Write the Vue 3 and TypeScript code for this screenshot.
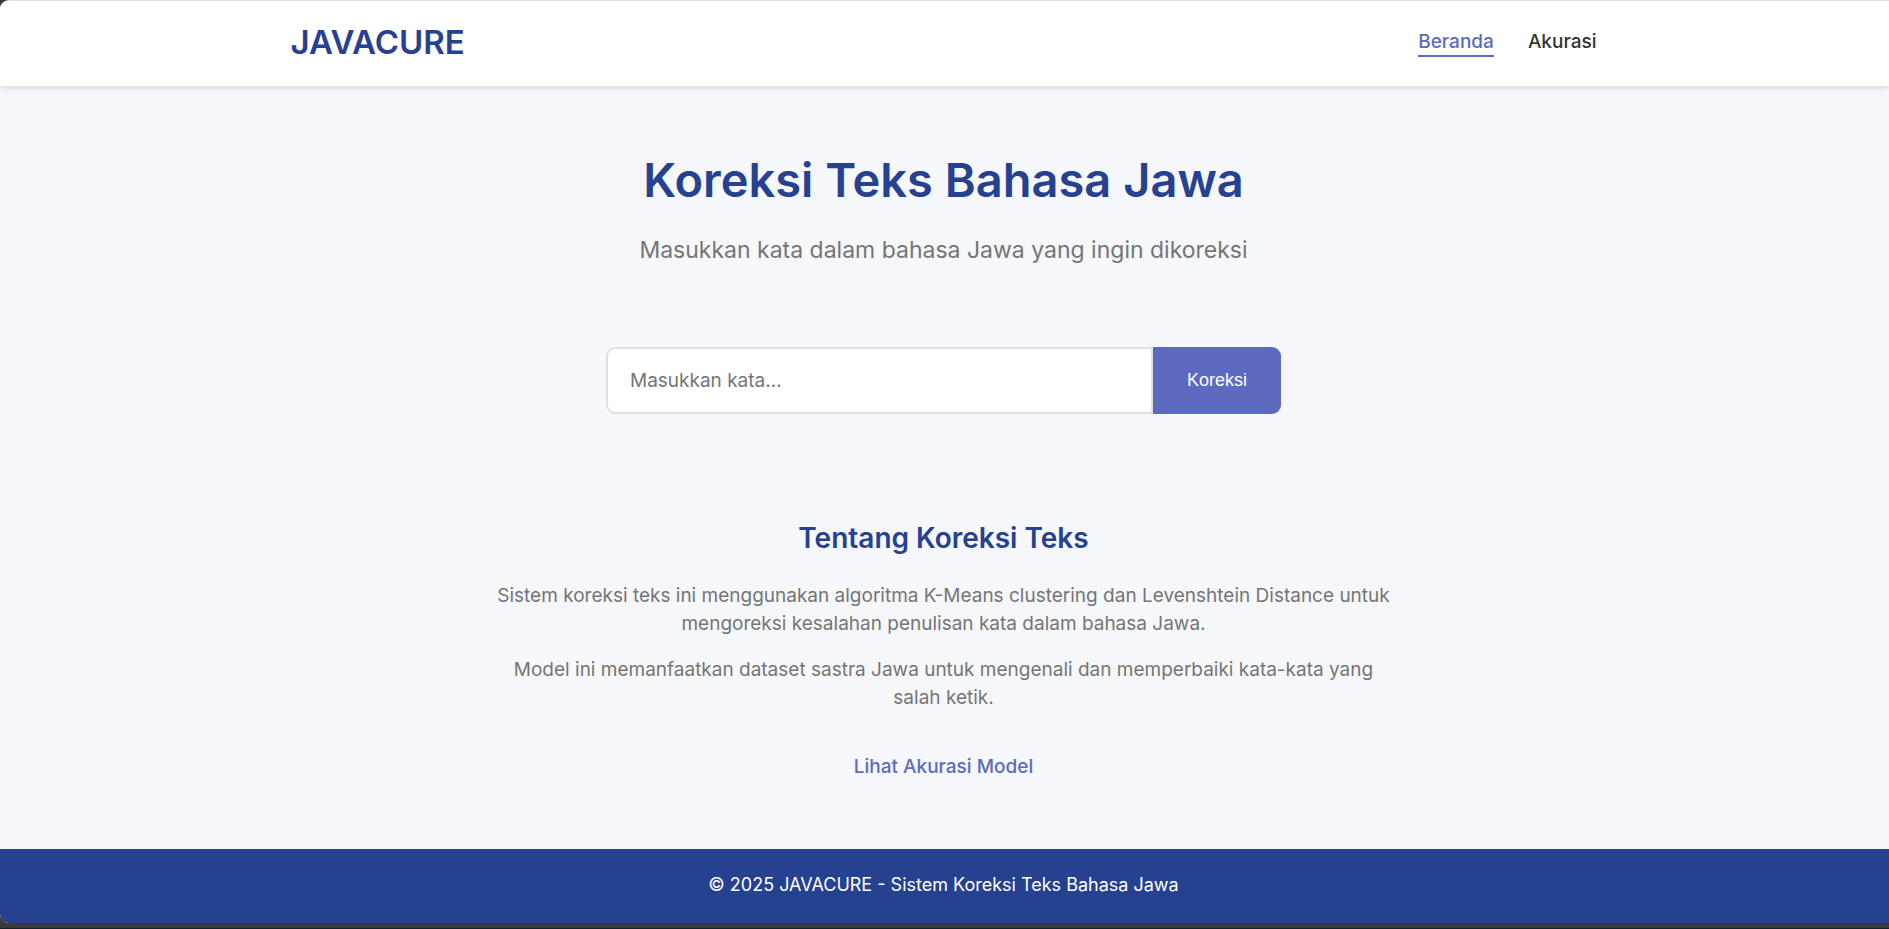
<script setup lang="ts">
import { ref } from 'vue'

interface NavItem {
  label: string
  href: string
  active: boolean
}

const navItems: NavItem[] = [
  { label: 'Beranda', href: '#beranda', active: true },
  { label: 'Akurasi', href: '#akurasi', active: false },
]

const paragraphs: string[] = [
  'Sistem koreksi teks ini menggunakan algoritma K-Means clustering dan Levenshtein Distance untuk mengoreksi kesalahan penulisan kata dalam bahasa Jawa.',
  'Model ini memanfaatkan dataset sastra Jawa untuk mengenali dan memperbaiki kata-kata yang salah ketik.',
]

const word = ref('')
</script>

<template>
  <div class="page">
    <header class="header">
      <div class="container">
        <div class="logo">JAVACURE</div>
        <nav class="nav">
          <a
            v-for="item in navItems"
            :key="item.href"
            :href="item.href"
            class="nav-link"
            :class="{ active: item.active }"
          >{{ item.label }}</a>
        </nav>
      </div>
    </header>

    <main class="main">
      <section class="hero">
        <h1>Koreksi Teks Bahasa Jawa</h1>
        <p>Masukkan kata dalam bahasa Jawa yang ingin dikoreksi</p>
      </section>

      <form class="search" @submit.prevent>
        <input v-model="word" type="text" placeholder="Masukkan kata..." aria-label="Masukkan kata" />
        <button type="submit">Koreksi</button>
      </form>

      <section class="about">
        <h2>Tentang Koreksi Teks</h2>
        <p v-for="text in paragraphs" :key="text">{{ text }}</p>
        <a href="#akurasi" class="more">Lihat Akurasi Model</a>
      </section>
    </main>

    <footer class="footer">
      <p>© 2025 JAVACURE - Sistem Koreksi Teks Bahasa Jawa</p>
    </footer>
  </div>
</template>

<style>
body {
  background: #3a3a3a;
}
</style>

<style scoped>
.page {
  display: flex;
  flex-direction: column;
  box-sizing: border-box;
  min-height: calc(100vh - 6px);
  overflow: hidden;
  border-top: 1px solid #e0e0e0;
  border-radius: 9px 0 0 9px;
  background: #f5f7fb;
  color: #333;
  font-family: Inter, "Open Sans", sans-serif;
  font-size: 19px;
  line-height: 28px;
}

.page::after {
  content: "";
  position: fixed;
  right: 0;
  bottom: 0;
  left: 0;
  height: 1px;
  background: #14222a;
}

.header {
  position: relative;
  padding: 19px 2px 21px 0;
  background: #fff;
  box-shadow: 0 2px 6px rgba(0, 0, 0, 0.13);
}

.container {
  display: flex;
  align-items: center;
  justify-content: space-between;
  box-sizing: border-box;
  max-width: 1306px;
  margin: 0 auto;
}

.logo {
  color: #26418f;
  font-size: 33px;
  font-weight: 600;
  line-height: 45px;
}

.nav {
  display: flex;
  gap: 34px;
}

.nav-link {
  border-bottom: 2px solid transparent;
  color: #333;
  font-weight: 500;
  line-height: 26px;
  text-decoration: none;
}

.nav-link.active {
  border-color: #5c6bc0;
  color: #5c6bc0;
}

.main {
  flex: 1;
  padding: 57px 26px 0 24px;
  text-align: center;
}

.hero h1 {
  margin: 0;
  color: #26418f;
  font-size: 47px;
  font-weight: 600;
  line-height: 74px;
}

.hero p {
  margin: 16px 0 0;
  color: #757575;
  font-size: 23px;
  line-height: 34px;
}

.search {
  display: flex;
  max-width: 675px;
  margin: 80px auto 0;
}

.search input {
  flex: 1;
  box-sizing: border-box;
  min-width: 0;
  height: 67px;
  padding: 0 22px;
  border: 2px solid #e0e0e0;
  border-radius: 9px 0 0 9px;
  background: #fff;
  color: #333;
  font: inherit;
}

.search input::placeholder {
  color: #757575;
  opacity: 1;
}

.search button {
  padding: 0 34px;
  border: 0;
  border-radius: 0 9px 9px 0;
  background: #5c6bc0;
  color: #fff;
  font-family: "Liberation Sans", Arial, sans-serif;
  font-size: 18px;
}

.about {
  max-width: 900px;
  margin: 102px auto 0;
}

.about h2 {
  margin: 0 0 21px;
  color: #26418f;
  font-size: 28px;
  font-weight: 600;
  line-height: 45px;
}

.about p {
  margin: 0 0 18px;
  color: #757575;
}

.more {
  display: inline-block;
  margin-top: 23px;
  color: #5c6bc0;
  font-weight: 500;
  text-decoration: none;
}

.footer {
  padding: 21px 26px 23px 24px;
  background: #26418f;
  color: #fff;
  font-size: 18px;
  text-align: center;
}

.footer p {
  margin: 0;
  line-height: 30px;
}
</style>
